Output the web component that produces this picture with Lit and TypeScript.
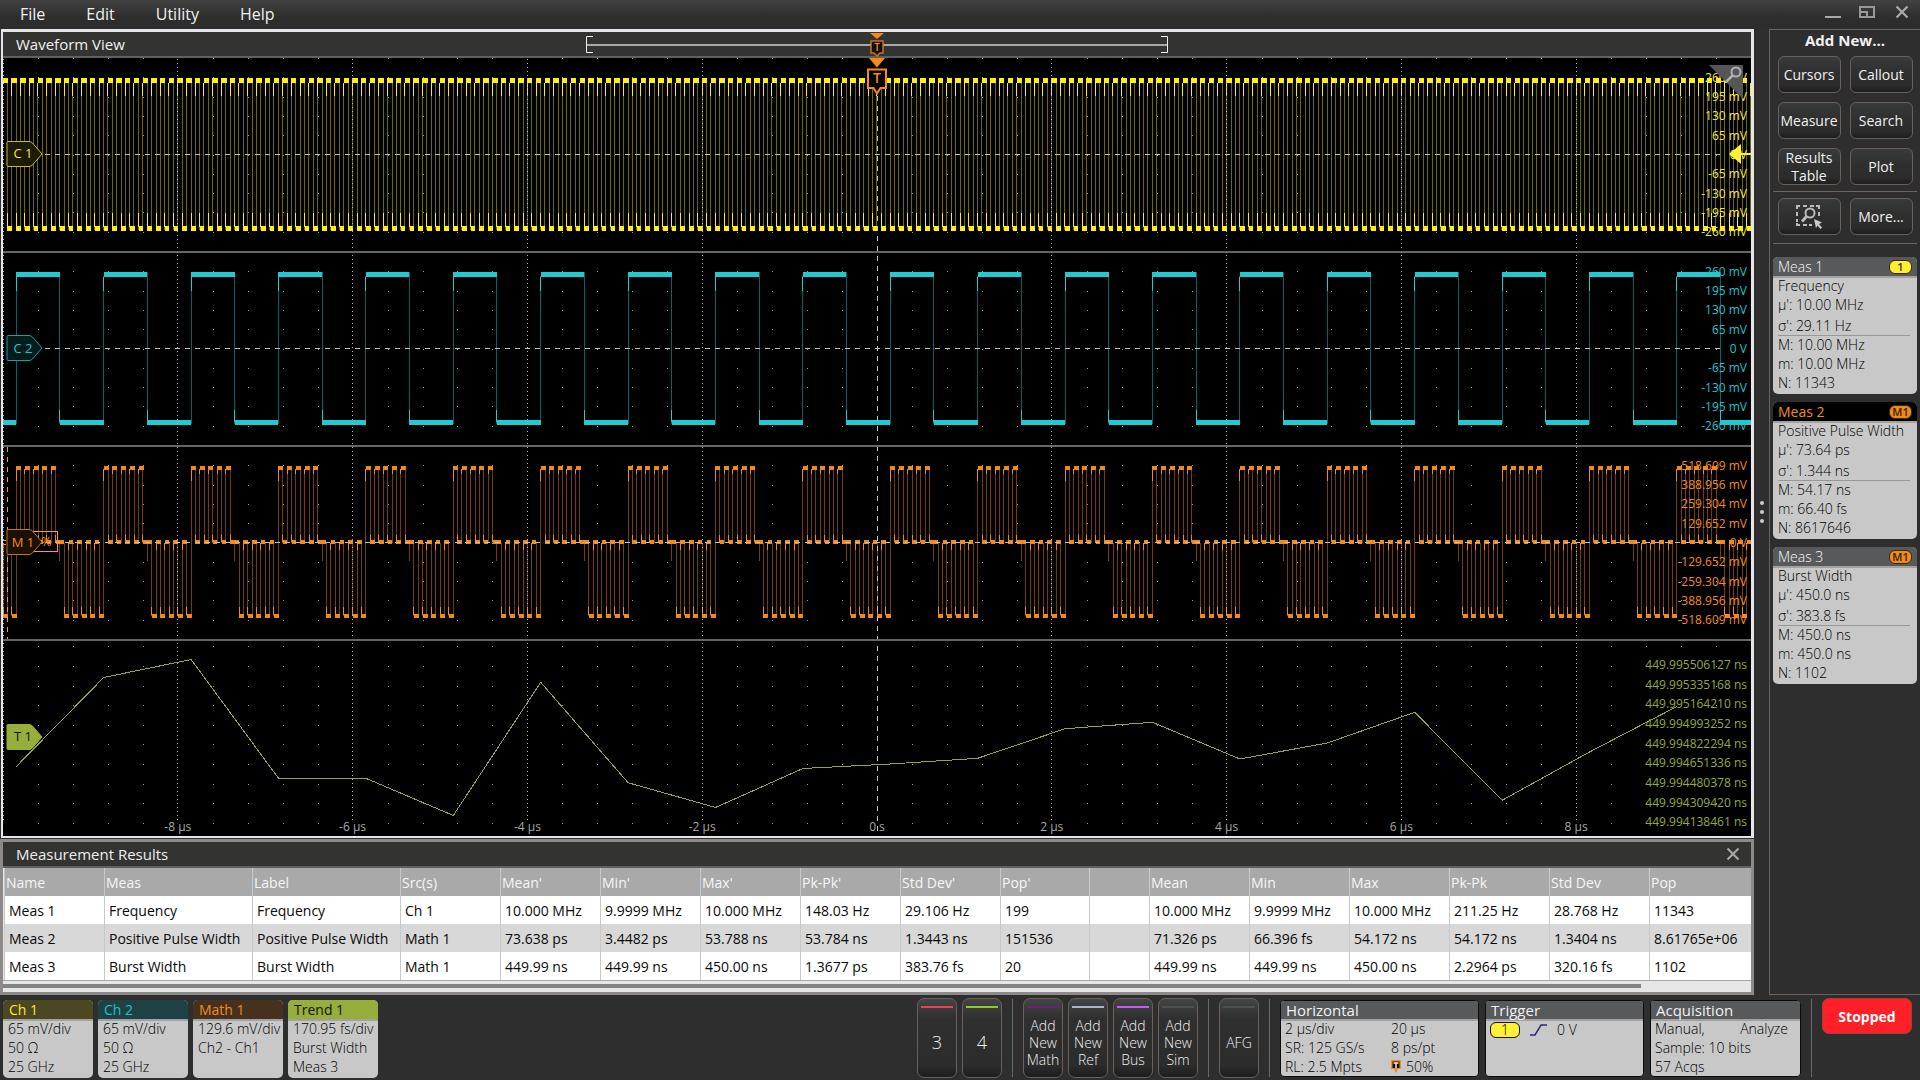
import { LitElement, html, svg, css, nothing } from "lit";
import { customElement, property } from "lit/decorators.js";
import { classMap } from "lit/directives/class-map.js";

const PLOT_W = 1748;
const PLOT_H = 778;
const DIV = 174.8;
const CARRIER = 8.74;
const BURST = 87.4;

const half = (v: number) => Math.floor(v) + 0.5;
const vline = (x: number, y1: number, y2: number) => `M${half(x)} ${y1}V${y2}`;
const bar = (x1: number, x2: number, y: number, h: number) => {
  const a = Math.round(Math.max(0, x1));
  const b = Math.round(Math.min(PLOT_W, x2));
  return b > a ? `M${a} ${y}h${b - a}v${h}h${a - b}z` : "";
};

interface Trace {
  dim: string;
  bright: string;
  solid: string;
}

function channel1(): Trace {
  let dim = "";
  let bright = "";
  let solid = "";
  for (let n = -1; n <= 200; n++) {
    const rise = 8.6 + CARRIER * n;
    const fall = rise + 4.6;
    solid += bar(rise - 0.2, fall + 0.6, 20, 5) + bar(fall, fall + 4.7, 168, 5);
    if (rise > 0 && rise < PLOT_W) {
      dim += vline(rise, 25, 172);
      bright += vline(rise, 25, 38);
    }
    if (fall > 0 && fall < PLOT_W) {
      dim += vline(fall, 25, 172);
      bright += vline(fall, 155, 169);
    }
  }
  return { dim, bright, solid };
}

function channel2(): Trace {
  let dim = "";
  let bright = "";
  let solid = bar(0, 13, 362, 5);
  for (let n = 0; n < 20; n++) {
    const rise = 13.2 + BURST * n;
    const fall = rise + 43.6;
    solid += bar(rise, fall, 214, 5) + bar(fall, rise + BURST, 362, 5);
    dim += vline(rise, 218, 366) + vline(fall, 214, 366);
    bright += vline(rise, 219, 233) + vline(fall, 352, 364);
  }
  return { dim, bright, solid };
}

function math1(): Trace {
  let dim = "";
  let bright = "";
  let solid = "";
  for (let n = -1; n < 20; n++) {
    const start = 13.2 + BURST * n;
    for (let k = 0; k < 5; k++) {
      const up = start + CARRIER * k;
      const down = up + 4.4;
      solid += bar(up, down + 0.6, 408, 4);
      solid += bar(down, k < 4 ? down + 4.6 : down + 8.6, 482, 4);
      const low = start + 48 + CARRIER * k;
      solid += bar(low, low + 5, 556, 4);
      if (k < 4) solid += bar(low + 4.4, low + 9, 482, 4);
      for (const x of [up, down]) if (x > 0 && x < PLOT_W) dim += vline(x, 411, 485);
      for (const x of [low, low + 4.4]) if (x > 0 && x < PLOT_W && !(k === 4 && x > low)) dim += vline(x, 485, 558);
      if (up > 0) bright += vline(up, 411, k ? 416 : 423) + vline(down, 477, 484);
      if (low > 0) bright += vline(low, 549, 557) + (k < 4 ? vline(low + 4.4, 485, 492) : "");
    }
    if (start > -40) dim += vline(start + 43.6, 485, 503);
    if (start + BURST < PLOT_W) dim += vline(start + BURST, 485, 558);
  }
  return { dim, bright, solid };
}

const trendValues = [
  708.5, 619.5, 601.5, 720.3, 720.3, 757.5, 624.3, 724.7, 749.5, 710.5,
  706, 700.3, 670.7, 664.3, 701, 685, 654.3, 742.3, 694, 648.5,
];
const trend = trendValues.map((y, i) => `${(13.3 + i * BURST).toFixed(1)},${y}`).join(" ");

function minorDots(): string {
  let d = "";
  const rows: number[] = [];
  for (let k = -5; k <= 4; k++) rows.push(96.5 + 19.3 * k);
  for (let k = -4; k <= 4; k++) rows.push(290.5 + 19.3 * k);
  for (let k = -4; k <= 5; k++) rows.push(484.5 + 19.3 * k);
  for (let k = 0; k <= 9; k++) rows.push(588.3 + 19.6 * k);
  for (let i = 1; i < 50; i++) {
    if (i % 5 === 0) continue;
    const x = Math.round((i * DIV) / 5);
    for (const r of rows) d += `M${x} ${Math.max(0, Math.round(r))}h1v1h-1z`;
  }
  return d;
}

const traces = { c1: channel1(), c2: channel2(), m1: math1() };
const dots = minorDots();

const millivolts = ["260 mV", "195 mV", "130 mV", "65 mV", "0 V", "-65 mV", "-130 mV", "-195 mV", "-260 mV"];
const lanes = [
  { key: "c1", labels: millivolts },
  { key: "c2", labels: millivolts },
  {
    key: "m1",
    labels: ["518.609 mV", "388.956 mV", "259.304 mV", "129.652 mV", "0 V", "-129.652 mV", "-259.304 mV", "-388.956 mV", "-518.609 mV"],
  },
  {
    key: "t1",
    labels: [
      "449.995506127 ns", "449.995335168 ns", "449.995164210 ns", "449.994993252 ns", "449.994822294 ns",
      "449.994651336 ns", "449.994480378 ns", "449.994309420 ns", "449.994138461 ns",
    ],
  },
];
const times = ["-8 µs", "-6 µs", "-4 µs", "-2 µs", "0 s", "2 µs", "4 µs", "6 µs", "8 µs"];

const base = css`
  * { box-sizing: border-box; }
  button { font: inherit; color: inherit; border: 0; background: none; padding: 0; margin: 0; cursor: pointer; }
`;

@customElement("scope-plot")
export class ScopePlot extends LitElement {
  static styles = [
    base,
    css`
      :host { display: block; position: relative; background: #000; overflow: hidden; min-height: 600px; font-size: 12px; }
      .canvas { position: absolute; inset: 0; width: 100%; height: 100%; display: block; }
      .lanes { position: absolute; inset: 0; display: grid; grid-template-rows: 195fr 194fr 194fr 195fr; }
      .lane { position: relative; display: flex; flex-direction: column; align-items: flex-end; padding: 9px 4px 11px; }
      .lane.c1 { padding-top: 10px; color: #f3e93a; }
      .lane.c2 { color: #22c3c9; }
      .lane.m1 { color: #f08c1e; }
      .lane.t1 { color: #93ab3a; padding: 14px 4px 4px; }
      .tick { flex: 1; display: flex; align-items: center; line-height: 16px; white-space: nowrap; }
      .badge { position: absolute; left: 3px; top: 50%; width: 38px; height: 28px; margin-top: -16px; font-size: 13px; }
      .badge svg { display: block; }
      .badge span { position: absolute; inset: 0 4px 1px 0; display: grid; place-items: center; white-space: pre; }
      .t1 .badge span { color: #111; }
      .percent { position: absolute; left: 28px; top: 50%; width: 27px; height: 21px; margin-top: -13px; border: 1px solid #ff9a2e; font-size: 13px; line-height: 19px; padding-left: 9px; color: #f08c1e; }
      .times { position: absolute; left: 0; right: 0; bottom: 0; padding: 0 5%; display: flex; color: #a8a8a8; }
      .times span { flex: 1; text-align: center; line-height: 18px; }
      .zoom { position: absolute; right: 6px; top: 7px; width: 36px; height: 36px; }
      .level { position: absolute; right: 0; top: 86px; width: 22px; height: 20px; }
      .trigger { position: absolute; left: 50%; top: 0; width: 22px; height: 40px; margin-left: -11px; }
      .trigger svg { display: block; }
      .trigger span { position: absolute; left: 0; right: 0; top: 10px; text-align: center; color: #f68a1e; font-size: 14px; font-weight: 600; line-height: 20px; }
    `,
  ];

  private trace(key: "c1" | "c2" | "m1", dim: string, bright: string) {
    const t = traces[key];
    return svg`
      <path d=${t.dim} stroke=${dim} fill="none"></path>
      <path d=${t.bright} stroke=${bright} fill="none"></path>
      <path d=${t.solid} fill=${bright}></path>`;
  }

  private badge(key: string) {
    const tint: Record<string, [string, string, string]> = {
      c1: ["#1d1b06", "#c9bd2c", "C 1"],
      c2: ["#041b1c", "#1a9da3", "C 2"],
      m1: ["#1c0f04", "#c9731b", "M 1"],
      t1: ["#97ae3b", "#97ae3b", "T 1"],
    };
    const [fill, stroke, text] = tint[key];
    return html`<div class="badge">
      <svg width="38" height="28" viewBox="0 0 38 28">
        <path d="M2 1.500H23Q25 1.500 26.500 3L36 14L26.500 25Q25 26.500 23 26.500H2Q1 26.500 1 25.500V2.500Q1 1.500 2 1.500Z" fill=${fill} stroke=${stroke}></path>
      </svg>
      <span>${text}</span>
    </div>`;
  }

  render() {
    return html`
      <svg class="canvas" viewBox="0 0 ${PLOT_W} ${PLOT_H}" preserveAspectRatio="none" shape-rendering="crispEdges" aria-hidden="true">
        <path d=${dots} fill="#9a9a9a"></path>
        ${this.trace("c1", "#6f6800", "#fdee16")}
        ${this.trace("c2", "#0d5f63", "#22c9d0")}
        ${this.trace("m1", "#713f07", "#f08a18")}
        ${[0, 1, 2, 3, 4, 6, 7, 8, 9].map(
          (i) => svg`<path d="M${half(i * DIV)} 1V762" stroke="#b4b4b4" stroke-dasharray="1 3"></path>`,
        )}
        <path d="M874.500 38V778" stroke="#c4c4c4" stroke-dasharray="5 5"></path>
        ${[96.5, 290.5, 484.5].map(
          (y) => svg`<path d="M42 ${y}H1718" stroke="#c0c0c0" stroke-dasharray="5 5"></path>`,
        )}
        <polyline points=${trend} fill="none" stroke="#93a833" stroke-width="1"></polyline>
        <path d="M4.500 389V581" stroke="#ff9a2e" stroke-dasharray="5 5"></path>
        <path d="M0 482.500H3M0 486.500H3" stroke="#ff9a2e"></path>
        <path d="M0 194H1748M0 388H1748M0 582H1748" stroke="#666" stroke-width="2"></path>
      </svg>
      <div class="lanes">
        ${lanes.map(
          (l) => html`<div class="lane ${l.key}">
            ${l.labels.map((t) => html`<span class="tick">${t}</span>`)}
            ${l.key === "m1" ? html`<div class="percent">%</div>` : nothing}
            ${this.badge(l.key)}
          </div>`,
        )}
      </div>
      <div class="times">${times.map((t) => html`<span>${t}</span>`)}</div>
      <svg class="zoom" viewBox="0 0 36 36">
        <path d="M0 0H34V34Z" fill="#555"></path>
        <circle cx="27" cy="7" r="4.500" fill="none" stroke="#b0b0b0" stroke-width="2"></circle>
        <path d="M23.500 10.500L17 17" stroke="#b0b0b0" stroke-width="2.500"></path>
      </svg>
      <svg class="level" viewBox="0 0 22 20"><path d="M0 10L12 0V9H22V11H12V20Z" fill="#fff033"></path></svg>
      <div class="trigger">
        <svg width="22" height="40" viewBox="0 0 22 40">
          <path d="M3 0H19L11 9.500Z" fill="#f68a1e"></path>
          <path d="M2 11.500H20V30H14.500L11 35.500L7.500 30H2Z" fill="#000" stroke="#f68a1e" stroke-width="2"></path>
        </svg>
        <span>T</span>
      </div>
    `;
  }
}

const columns = ["Name", "Meas", "Label", "Src(s)", "Mean'", "Min'", "Max'", "Pk-Pk'", "Std Dev'", "Pop'", "", "Mean", "Min", "Max", "Pk-Pk", "Std Dev", "Pop"];
const rows = [
  ["Meas 1", "Frequency", "Frequency", "Ch 1", "10.000 MHz", "9.9999 MHz", "10.000 MHz", "148.03 Hz", "29.106 Hz", "199", "", "10.000 MHz", "9.9999 MHz", "10.000 MHz", "211.25 Hz", "28.768 Hz", "11343"],
  ["Meas 2", "Positive Pulse Width", "Positive Pulse Width", "Math 1", "73.638 ps", "3.4482 ps", "53.788 ns", "53.784 ns", "1.3443 ns", "151536", "", "71.326 ps", "66.396 fs", "54.172 ns", "54.172 ns", "1.3404 ns", "8.61765e+06"],
  ["Meas 3", "Burst Width", "Burst Width", "Math 1", "449.99 ns", "449.99 ns", "450.00 ns", "1.3677 ps", "383.76 fs", "20", "", "449.99 ns", "449.99 ns", "450.00 ns", "2.2964 ps", "320.16 fs", "1102"],
];

@customElement("results-table")
export class ResultsTable extends LitElement {
  static styles = [
    base,
    css`
      :host { display: block; border: 3px solid #8f8a8a; background: #e6e6e6; }
      .title { display: flex; align-items: center; justify-content: space-between; height: 26px; padding: 0 11px 0 13px; background: #333331; border-bottom: 2px solid #606060; color: #eee; font-size: 15px; }
      h2 { margin: 0; padding-top: 1px; font-size: inherit; font-weight: 400; line-height: 23px; }
      .close { width: 14px; height: 14px; }
      .close svg { display: block; }
      .body { padding-left: 1px; }
      table { width: 100%; border-collapse: collapse; table-layout: fixed; color: #0a0a0a; font-size: 14px; line-height: 20px; }
      .narrow { width: 60px; }
      .mid { width: 100px; }
      .pop { width: 89px; }
      .wide { width: 148px; }
      th, td { height: 28px; padding: 1px 0 0 4px; text-align: left; font-weight: 400; white-space: nowrap; border-left: 1px solid #c9c9c9; overflow: hidden; }
      th { background: #a9a9a9; color: #f6f6f6; padding-left: 1px; }
      td { background: #fff; }
      tr:nth-child(even) td { background: #d8d8d8; }
      .scroll { height: 11px; border-top: 1px solid #a8a8a8; padding: 3px 0; }
      .thumb { width: calc(100% - 110px); height: 4px; background: #838583; }
      .foot { height: 1px; }
    `,
  ];

  render() {
    const width = (i: number) => (i === 1 || i === 2 ? "wide" : i === 9 ? "pop" : i === 10 ? "narrow" : i === 16 ? "" : "mid");
    return html`
      <div class="title">
        <h2>Measurement Results</h2>
        <button class="close" aria-label="Close results">
          <svg width="14" height="14" viewBox="0 0 14 14"><path d="M1.500 1.500L12.500 12.500M12.500 1.500L1.500 12.500" stroke="#aaa" stroke-width="2"></path></svg>
        </button>
      </div>
      <div class="body">
        <table>
          <colgroup>${columns.map((_, i) => html`<col class=${width(i)} />`)}</colgroup>
          <thead><tr>${columns.map((c) => html`<th>${c}</th>`)}</tr></thead>
          <tbody>${rows.map((r) => html`<tr>${r.map((c) => html`<td>${c}</td>`)}</tr>`)}</tbody>
        </table>
      </div>
      <div class="scroll"><div class="thumb"></div></div>
      <div class="foot"></div>
    `;
  }
}

@customElement("meas-card")
export class MeasCard extends LitElement {
  @property() name = "";
  @property() kind = "";
  @property() source = "";
  @property({ type: Boolean }) selected = false;
  @property({ attribute: false }) top: string[] = [];
  @property({ attribute: false }) bottom: string[] = [];

  static styles = [
    base,
    css`
      :host { display: block; height: 137px; border-radius: 5px; overflow: hidden; background: #c8c8c8; color: #000; font-size: 14px; font-weight: 300; }
      .head { display: flex; align-items: center; justify-content: space-between; height: 21px; padding: 0 5px; background: #58595b; border-bottom: 2px solid #a2a2a2; color: #f8f8f8; }
      .head.selected { background: #000; color: #f58c1f; font-weight: 400; }
      .pill { width: 23px; height: 14px; border-radius: 6px; border: 1px solid #3a2a00; background: #f08a18; color: #3a2000; font-size: 11px; font-weight: 600; line-height: 12px; text-align: center; }
      .pill.yellow { background: #fff033; color: #333; }
      .row { padding: 0 5px; height: 19px; line-height: 16px; white-space: nowrap; }
      .row.dev { line-height: 20px; }
      .sep { margin: 0 7px 1px 5px; border-top: 1px solid #98989c; }
    `,
  ];

  render() {
    return html`
      <div class=${classMap({ head: true, selected: this.selected })}>
        <span>${this.name}</span>
        <span class=${classMap({ pill: true, yellow: this.source === "1" })}>${this.source}</span>
      </div>
      <div class="row">${this.kind}</div>
      ${this.top.map((t, i) => html`<div class=${classMap({ row: true, dev: i === 1 })}>${t}</div>`)}
      <div class="sep"></div>
      ${this.bottom.map((t) => html`<div class="row">${t}</div>`)}
    `;
  }
}

const addButtons = ["Cursors", "Callout", "Measure", "Search", "Results Table", "Plot"];
const channels = [
  { name: "Ch 1", tone: "yellow", lines: ["65 mV/div", "50 Ω", "25 GHz"] },
  { name: "Ch 2", tone: "teal", lines: ["65 mV/div", "50 Ω", "25 GHz"] },
  { name: "Math 1", tone: "orange", lines: ["129.6 mV/div", "Ch2 - Ch1"] },
  { name: "Trend 1", tone: "green", lines: ["170.95 fs/div", "Burst Width", "Meas 3"] },
];

@customElement("app-root")
export class AppRoot extends LitElement {
  static styles = [
    base,
    css`
      :host { display: flex; flex-direction: column; min-height: 100vh; background: #2e2e2e; color: #f0f0f0; font-family: "Open Sans", "Noto Sans", sans-serif; font-size: 14px; overflow: hidden; }
      .menu { display: flex; align-items: flex-start; height: 29px; padding: 0 9px 0 20px; background: linear-gradient(#424242, #2d2d2d 60%); }
      nav { display: flex; gap: 41px; flex: 1; font-size: 16px; line-height: 28px; }
      .window { display: flex; gap: 18px; align-items: center; height: 24px; }
      .window svg { display: block; }
      main { flex: 1; display: flex; min-height: 0; }
      .work { flex: 1; min-width: 0; display: flex; flex-direction: column; gap: 1px; }
      .wave { flex: 1; display: flex; flex-direction: column; margin-left: 1px; border: solid #e6e6ea; border-width: 3px 3px 2px 2px; }
      .bar { position: relative; height: 26px; background: #333331; border-bottom: 2px solid #606062; padding: 0 13px; font-size: 15px; }
      h1 { margin: 0; padding-top: 1px; font-size: inherit; font-weight: 400; line-height: 23px; }
      .overview { position: absolute; left: 50%; top: 1px; width: 584px; height: 25px; margin-left: -292px; }
      .overview svg { display: block; }
      .mark { position: absolute; left: 0; right: 0; top: 8px; text-align: center; font-size: 10px; font-weight: 600; line-height: 12px; color: #f68a1e; }
      scope-plot { flex: 1; }
      .split { width: 15px; display: flex; flex-direction: column; justify-content: center; align-items: center; gap: 5px; }
      .split i { width: 4px; height: 4px; border-radius: 2px; background: #ccc; }
      aside { width: 151px; border: solid #69625f; border-width: 1px 0 1px 1px; padding: 0 3px; }
      aside h2 { margin: 0; height: 26px; text-align: center; font-size: 15px; line-height: 20px; }
      .pair { display: grid; grid-template-columns: 63px 63px; gap: 9px; justify-content: center; padding: 0 0 6px; }
      .tool { height: 37px; border: 1px solid #6a5f5a; border-radius: 6px; background: linear-gradient(#383a3b, #2f2f2f 45%, #2c2c2c 80%, #1f1f1f); font-size: 14px; line-height: 18px; display: grid; place-items: center; white-space: nowrap; }
      .tool.two { white-space: normal; }
      .extra { border: solid #6b6460; border-width: 1px 0; padding: 6px 0 8px; }
      .extra .pair { padding: 0; }
      .cards { display: grid; gap: 8px; padding-top: 13px; }
      footer { display: flex; align-items: stretch; height: 85px; padding: 3px 8px 2px 3px; }
      .chan { display: flex; gap: 5px; padding-top: 2px; }
      .badge { width: 90px; border-radius: 5px; overflow: hidden; background: #c8c8c8; color: #000; font-weight: 300; line-height: 19px; text-align: left; display: flex; flex-direction: column; white-space: nowrap; }
      .badge b { display: block; font-weight: 400; font-size: 14px; height: 21px; line-height: 19px; padding: 0 6px; border-bottom: 2px solid #a2a2a2; }
      .badge span { display: block; padding: 0 5px; height: 19px; line-height: 15px; }
      .yellow b { background: #4b4722; color: #f8ea30; }
      .teal b { background: #1e4243; color: #22c3c9; }
      .orange b { background: #46311f; color: #f08a1e; }
      .green b { background: #97ae3b; color: #111; }
      .fill { flex: 1; }
      .keys { display: flex; gap: 5px; }
      .key { width: 40px; padding: 7px 3px 0; border: 1px solid #6a5f5a; border-radius: 7px; background: linear-gradient(#434545, #2f2f2f 25%, #2c2c2c 85%, #1d1d1d); display: flex; flex-direction: column; font-size: 14px; font-weight: 300; line-height: 17px; text-align: center; }
      .key::before { content: ""; height: 2px; background: var(--tone, #505050); }
      .key span { flex: 1; display: grid; place-items: center; margin: 0 -3px; padding-bottom: 1px; }
      .key.big { font-size: 18px; }
      .key.red { --tone: #e8415c; }
      .key.lime { --tone: #8fc92e; }
      .key.violet { --tone: #64267c; }
      .key.silver { --tone: #aeb4c4; }
      .key.purple { --tone: #c45cf0; }
      .rule { width: 1px; margin: 1px 10px; background: #6a6a6a; }
      .infos { display: flex; gap: 6px; padding: 2px 0 1px; }
      .info { border: 1px solid #0c0c0c; border-radius: 4px; overflow: hidden; background: #c8c8c8; color: #000; font-weight: 300; }
      .info h3 { margin: 0; height: 20px; padding: 0 5px; background: #58595b; color: #f2f2f2; border-bottom: 2px solid #a2a2a2; font-size: 15px; font-weight: 400; line-height: 18px; }
      .cells { display: grid; grid-template-columns: auto auto; padding: 0 4px; line-height: 15px; grid-auto-rows: 18px; row-gap: 1px; white-space: nowrap; }
      .horizontal { width: 199px; }
      .horizontal .cells { grid-template-columns: 106px 1fr; }
      .trig { width: 159px; }
      .acq { width: 151px; }
      .acq .cells { padding-right: 12px; justify-content: space-between; }
      .line { display: flex; align-items: center; gap: 10px; padding: 0 4px; line-height: 17px; }
      .src { width: 30px; height: 16px; border-radius: 6px; border: 1px solid #111; background: #fff033; text-align: center; line-height: 14px; }
      .span { grid-column: 1 / -1; }
      .pos { display: flex; align-items: center; gap: 5px; height: 15px; }
      .stop { width: 90px; height: 36px; border-radius: 7px; border: 1px solid #a04040; background: #fe2026; color: #fff; font-weight: 700; font-size: 14px; }
    `,
  ];

  private key(text: string, tone: string) {
    const lines = text.split("|");
    return html`<button class="key ${tone}"><span>${lines.map((l, i) => html`${i ? html`<br />` : nothing}${l}`)}</span></button>`;
  }

  render() {
    return html`
      <div class="menu">
        <nav>${["File", "Edit", "Utility", "Help"].map((m) => html`<button>${m}</button>`)}</nav>
        <div class="window">
          <button aria-label="Minimize"><svg width="16" height="14" viewBox="0 0 16 14"><path d="M0 12H16" stroke="#aaa" stroke-width="2"></path></svg></button>
          <button aria-label="Restore"><svg width="16" height="12" viewBox="0 0 16 12"><path d="M1 1H15V11H1ZM1 6H8V11" fill="none" stroke="#999" stroke-width="2"></path></svg></button>
          <button aria-label="Close"><svg width="18" height="14" viewBox="0 0 18 14"><path d="M3.500 1.500L14.500 12.500M14.500 1.500L3.500 12.500" stroke="#aaa" stroke-width="2.200"></path></svg></button>
        </div>
      </div>
      <main>
        <div class="work">
          <section class="wave">
            <div class="bar">
              <h1>Waveform View</h1>
              <div class="overview">
                <svg width="584" height="25" viewBox="0 0 584 25">
                  <path d="M8 3.500H1.500V19.500H8M576 3.500H582.500V19.500H576" fill="none" stroke="#eee"></path>
                  <path d="M2 12H582" stroke="#a8a8a8" stroke-width="2"></path>
                  <path d="M285 0H299L292 6Z" fill="#f68a1e"></path>
                  <path d="M286 8H298V20H295L292 23L289 20H286Z" fill="#111" stroke="#c9731b" stroke-width="1.500"></path>
                </svg>
                <span class="mark">T</span>
              </div>
            </div>
            <scope-plot></scope-plot>
          </section>
          <results-table></results-table>
        </div>
        <div class="split"><i></i><i></i><i></i></div>
        <aside>
          <h2>Add New...</h2>
          <div class="pair">
            ${addButtons.map((b) => html`<button class=${classMap({ tool: true, two: b.includes(" ") })}>${b}</button>`)}
          </div>
          <div class="extra">
            <div class="pair">
              <button class="tool" aria-label="Draw a box">
                <svg width="28" height="26" viewBox="0 0 28 26">
                  <path d="M2 5V2H5M8 2H12M15 2H19M21 2H24V5M2 8V12M2 15V18M2 19V21H5M8 21H12M14 21H17M24 8V12" fill="none" stroke="#bbb" stroke-width="2"></path>
                  <circle cx="15" cy="9" r="4.500" fill="none" stroke="#bbb" stroke-width="2"></circle>
                  <path d="M11.500 12.500L7 17.500" stroke="#bbb" stroke-width="3"></path>
                  <path d="M19 15L27 18.500L24 20L27 23.500L25.500 25L22.500 21.500L21 24Z" fill="#ccc"></path>
                </svg>
              </button>
              <button class="tool">More...</button>
            </div>
          </div>
          <div class="cards">
            <meas-card name="Meas 1" source="1" kind="Frequency" .top=${["µ': 10.00 MHz", "σ': 29.11 Hz"]} .bottom=${["M: 10.00 MHz", "m: 10.00 MHz", "N: 11343"]}></meas-card>
            <meas-card name="Meas 2" source="M1" selected kind="Positive Pulse Width" .top=${["µ': 73.64 ps", "σ': 1.344 ns"]} .bottom=${["M: 54.17 ns", "m: 66.40 fs", "N: 8617646"]}></meas-card>
            <meas-card name="Meas 3" source="M1" kind="Burst Width" .top=${["µ': 450.0 ns", "σ': 383.8 fs"]} .bottom=${["M: 450.0 ns", "m: 450.0 ns", "N: 1102"]}></meas-card>
          </div>
        </aside>
      </main>
      <footer>
        <div class="chan">
          ${channels.map((c) => html`<button class="badge ${c.tone}"><b>${c.name}</b>${c.lines.map((l) => html`<span>${l}</span>`)}</button>`)}
        </div>
        <div class="fill"></div>
        <div class="keys">${this.key("3", "big red")}${this.key("4", "big lime")}</div>
        <div class="rule"></div>
        <div class="keys">
          ${this.key("Add|New|Math", "violet")}${this.key("Add|New|Ref", "silver")}${this.key("Add|New|Bus", "purple")}${this.key("Add|New|Sim", "")}
        </div>
        <div class="rule"></div>
        <div class="keys">${this.key("AFG", "")}</div>
        <div class="rule"></div>
        <div class="infos">
          <section class="info horizontal">
            <h3>Horizontal</h3>
            <div class="cells">
              <span>2 µs/div</span><span>20 µs</span>
              <span>SR: 125 GS/s</span><span>8 ps/pt</span>
              <span>RL: 2.5 Mpts</span>
              <span class="pos">
                <svg width="10" height="13" viewBox="0 0 10 13"><path d="M0 0H10V9H7L5 13L3 9H0Z" fill="#f68a1e"></path><path d="M1.500 1.500H8.500V8H1.500Z" fill="#111"></path><path d="M2.500 3H7.500M5 3V8" stroke="#eee" stroke-width="1.500"></path></svg>50%</span>
            </div>
          </section>
          <section class="info trig">
            <h3>Trigger</h3>
            <div class="line">
              <span class="src">1</span>
              <svg width="17" height="12" viewBox="0 0 17 12"><path d="M0 11H5L11 1H17" fill="none" stroke="#2c2a78" stroke-width="1.500"></path></svg>
              <span>0 V</span>
            </div>
          </section>
          <section class="info acq">
            <h3>Acquisition</h3>
            <div class="cells">
              <span>Manual,</span><span>Analyze</span>
              <span class="span">Sample: 10 bits</span>
              <span class="span">57 Acqs</span>
            </div>
          </section>
        </div>
        <div class="rule"></div>
        <button class="stop">Stopped</button>
      </footer>
    `;
  }
}
